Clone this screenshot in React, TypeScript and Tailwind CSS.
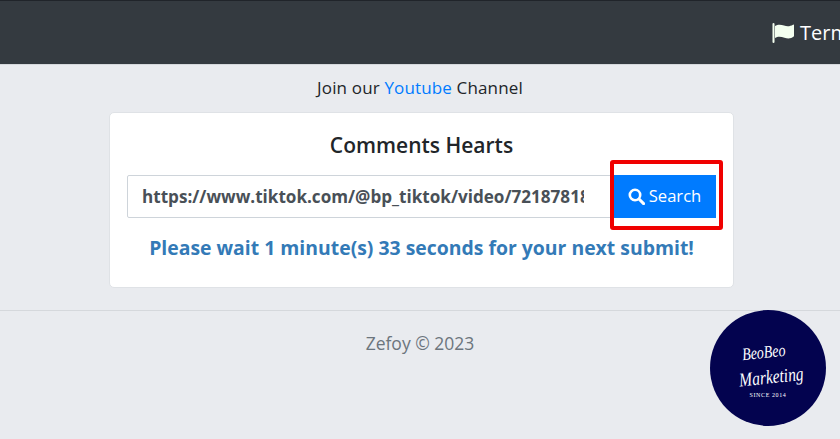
import React from "react";

function SearchIcon() {
  return (
    <svg width="17" height="17" viewBox="0 0 17 17" fill="none" stroke="white">
      <circle cx="7" cy="7" r="5.2" strokeWidth="2.6" />
      <path d="M11 11l4.6 4.6" strokeWidth="3" strokeLinecap="round" />
    </svg>
  );
}

function FlagIcon() {
  return (
    <svg width="23" height="20" viewBox="0 0 23 20" className="shrink-0">
      <rect x="0.5" y="0" width="2" height="20" rx="1" fill="#f4fff0" />
      <path d="M3 3c3-2 6-1.500 9-.5s6 1 9-.8c.6-.3 1 0 1 .5v11c-3 2.600-6 2.600-9.500 1.500S6 13 3 15z" fill="#f4fff0" />
    </svg>
  );
}

export default function App() {
  return (
    <div className="relative h-[439px] w-[840px] overflow-hidden bg-[#e9ebef] font-['Open_Sans','Noto_Sans',sans-serif] text-[#212529]">
      <header className="flex h-[65px] items-center justify-start overflow-hidden border-t border-t-[#20242a] border-b border-b-[#d5d8dc] bg-[#343a40] pl-[772px]">
        <div className="flex shrink-0 items-center gap-[5px] text-[20px] text-white">
          <FlagIcon />
          <span className="shrink-0">Terms</span>
        </div>
      </header>

      <p className="mt-[11px] text-center text-[17px] font-medium leading-[24px] tracking-[0.15px]">
        Join our <span className="text-[#007bff]">Youtube</span> Channel
      </p>

      <main className="ml-[109px] mt-[12px] h-[176px] w-[625px] rounded-[5px] border border-[#dfe2e6] bg-white px-[17px] pt-[16px]">
        <h1 className="text-center text-[21px] font-semibold leading-[32px] text-[#212529]">Comments Hearts</h1>
        <div className="mt-[14px] flex h-[43px]">
          <div className="flex w-[486px] items-center rounded-l-[2px] border border-[#ced4da] bg-white pl-[14px] pr-[28px] text-[17.100px] font-bold text-[#495057]">
            <span className="block overflow-hidden whitespace-nowrap">https://www.tiktok.com/@bp_tiktok/video/7218781843</span>
          </div>
          <button className="flex w-[103px] items-center justify-center gap-[4px] bg-[#007bff] text-[16.600px] text-white">
            <SearchIcon />
            Search
          </button>
        </div>
        <p className="mt-[16px] whitespace-nowrap text-center text-[19.400px] font-bold leading-[28px] text-[#337ab7]">
          Please wait 1 minute(s) 33 seconds for your next submit!
        </p>
      </main>

      <hr className="mt-[22px] border-t border-[#d5d8dc]" />
      <p className="mt-[20px] text-center text-[17.500px] leading-[24px] text-[#6c757d]">Zefoy © 2023</p>

      <div className="absolute left-[610px] top-[160px] h-[70px] w-[113px] rounded-[3px] border-[4px] border-[#f00000]" />

      <div className="absolute left-[710px] top-[310px] flex h-[116px] w-[116px] flex-col items-center rounded-full bg-[#03034f] pt-[34px] text-white">
        <span className="mr-[8px] -rotate-6 scale-y-125 font-['Liberation_Serif',serif] text-[14px] italic leading-[18px]">BeoBeo</span>
        <span className="ml-[6px] mt-[6px] -rotate-6 scale-y-125 font-['Liberation_Serif',serif] text-[15.500px] italic leading-[18px]">Marketing</span>
        <span className="mt-[5px] font-['Liberation_Serif',serif] text-[6px] leading-[8px] tracking-[0.6px]">SINCE 2014</span>
      </div>
    </div>
  );
}
